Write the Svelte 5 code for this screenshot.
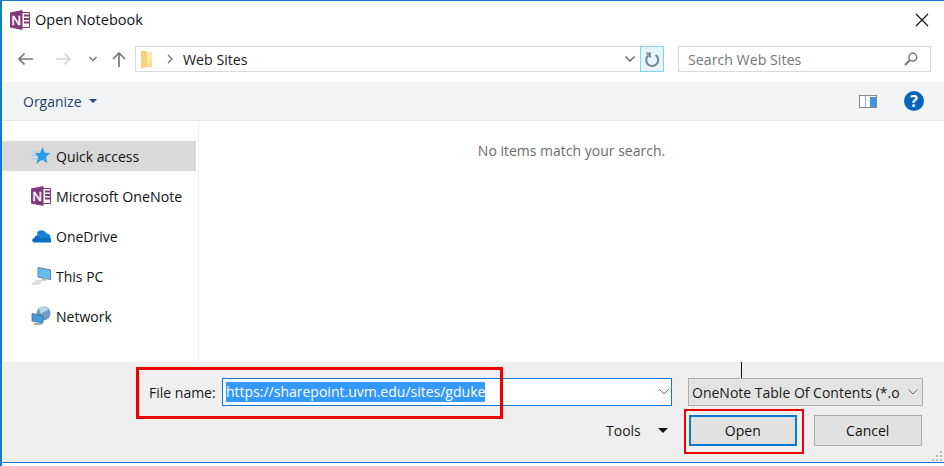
<script>
  const places = [
    { label: 'Quick access', icon: 'star', active: true },
    { label: 'Microsoft OneNote', icon: 'onenote' },
    { label: 'OneDrive', icon: 'cloud' },
    { label: 'This PC', icon: 'pc' },
    { label: 'Network', icon: 'network' },
  ]
</script>

{#snippet onenote()}
  <svg class="ico" viewBox="0 0 20 20" width="20" height="20">
    <path d="M11 2.500h8.500v15H11z" fill="#fff" stroke="#80397b" stroke-width="1" />
    <path d="M14 5.500h5M14 9h5M14 12.500h5" stroke="#80397b" stroke-width="2" />
    <path d="M0 2.500 12.500 0v20L0 17.500z" fill="#80397b" />
    <text x="6.200" y="14.500" class="n">N</text>
  </svg>
{/snippet}

<div class="dialog">
  <header class="title">
    {@render onenote()}
    <span class="title-text">Open Notebook</span>
    <svg class="close" viewBox="0 0 14 14" width="14" height="14">
      <path d="M1 1l12 12M13 1L1 13" stroke="#111" stroke-width="1.100" fill="none" />
    </svg>
  </header>

  <div class="nav">
    <div class="arrows">
      <svg class="back" viewBox="0 0 16 14" width="16" height="14"><path d="M16 7H2M7.500 1.500 2 7l5.500 5.500" stroke="#777" stroke-width="1.700" fill="none" /></svg>
      <svg class="forward" viewBox="0 0 16 14" width="16" height="14"><path d="M0 7h14M8.500 1.500 14 7l-5.500 5.500" stroke="#d4d4d4" stroke-width="1.700" fill="none" /></svg>
      <svg class="recent" viewBox="0 0 8 6" width="8" height="6"><path d="M.5 1 4 4.500 7.500 1" stroke="#777" stroke-width="1.500" fill="none" /></svg>
      <svg class="up" viewBox="0 0 14 16" width="14" height="16"><path d="M7 16V2M1 8l6-6 6 6" stroke="#777" stroke-width="1.700" fill="none" /></svg>
    </div>
    <div class="address">
      <svg class="folder" viewBox="0 0 12 18" width="12" height="18">
        <path d="M0 0h5l1 1v15l-5 1.500-1-1z" fill="#f3d27a" />
        <path d="M6 1h5v15H1l5-1z" fill="#fce9a9" />
        <path d="M11 9v7H4z" fill="#f7dc8e" />
      </svg>
      <svg class="crumb" viewBox="0 0 6 10" width="6" height="10"><path d="M1 1l4 4-4 4" stroke="#777" stroke-width="1.400" fill="none" /></svg>
      <span class="path">Web Sites</span>
      <svg class="drop" viewBox="0 0 10 6" width="10" height="6"><path d="M.5.500 5 5 9.500.5" stroke="#6a6a6a" stroke-width="1.500" fill="none" /></svg>
    </div>
    <div class="refresh">
      <svg viewBox="0 0 14 15" width="14" height="15">
        <path d="M3.600 3.200A6 6 0 1 0 10.500 3" stroke="#6d8494" stroke-width="2" fill="none" />
        <path d="M1.500 1.500h3.500v4" stroke="#6d8494" stroke-width="1.800" fill="none" />
      </svg>
    </div>
    <div class="search">
      <span>Search Web Sites</span>
      <svg viewBox="0 0 14 14" width="14" height="14">
        <circle cx="8.800" cy="5.200" r="3.900" stroke="#777" stroke-width="1.500" fill="none" />
        <path d="M6 8 1 13" stroke="#777" stroke-width="2" />
      </svg>
    </div>
  </div>

  <div class="toolbar">
    <span class="organize">Organize</span>
    <span class="caret navy"></span>
    <svg class="pane" viewBox="0 0 18 13" width="18" height="13">
      <rect x=".5" y=".5" width="17" height="12" fill="#fff" stroke="#888" />
      <path d="M6.500 1v11" stroke="#aaa" />
      <rect x="11" y="2" width="6" height="10" fill="#3f95e4" />
    </svg>
    <div class="help">?</div>
  </div>

  <div class="body">
    <nav class="side">
      {#each places as p}
        <div class="place" class:active={p.active}>
          <span class="place-icon">
            {#if p.icon === 'star'}
              <svg viewBox="0 0 20 20" width="20" height="20">
                <path d="M11.500 1l2.300 5.700 5.200.4-4 3.800 1.300 6.100-5.200-3.200-5.800 4 1.800-6.600L4 7.200l5.200-.5z" fill="#2b9be8" />
                <path d="M1.500 6h5M0 9.500h6M1 13h6" stroke="#8fcbf3" stroke-width="1" />
              </svg>
            {:else if p.icon === 'onenote'}
              {@render onenote()}
            {:else if p.icon === 'cloud'}
              <svg viewBox="0 0 20 14" width="20" height="14">
                <path d="M6 3.500A5.500 5.500 0 0 1 15.500 4.500a4 4 0 0 1 4 4.500H9L6 5z" fill="#1483d8" />
                <path d="M3.500 13.500H18a2.300 2.300 0 0 0 1-4.500h-9.500L7.500 6.500a3.500 3.500 0 0 0-4.200 2.600 2.200 2.200 0 0 0 .2 4.400z" fill="#0a6fc2" />
              </svg>
            {:else if p.icon === 'pc'}
              <svg viewBox="0 0 20 20" width="20" height="20">
                <path d="M7 1.500l12.500 2.300v9.700L7 11z" fill="#62bdee" stroke="#5a6f80" stroke-width=".8" />
                <path d="M0 19l5-5h7l-4 5z" fill="#d9dde0" />
                <path d="M11 12h4.500v2.500H11z" fill="#aab5bd" />
              </svg>
            {:else}
              <svg viewBox="0 0 20 20" width="20" height="20">
                <circle cx="12.500" cy="7.500" r="7" fill="#6f9cc0" />
                <path d="M8 3c3-3 7-2 9 0-1 3-5 2-7 5z" fill="#b9d7ea" />
                <path d="M1 7.500l11 2.500v7L1 15z" fill="#3f9fe0" stroke="#47657c" stroke-width=".8" />
                <path d="M3 17h8v2H3z" fill="#9fb1be" />
              </svg>
            {/if}
          </span>
          <span>{p.label}</span>
        </div>
      {/each}
    </nav>
    <main class="content">No items match your search.</main>
  </div>

  <footer class="footer">
    <div class="tick"></div>
    <div class="name-row">
      <label class="name-label" for="fname">File name:</label>
      <div class="name-input">
        <span class="selected" id="fname">https://sharepoint.uvm.edu/sites/gduke</span>
        <svg viewBox="0 0 10 6" width="10" height="6"><path d="M.5.500 5 5 9.500.5" stroke="#666" stroke-width="1" fill="none" /></svg>
      </div>
      <div class="type-select">
        <span>OneNote Table Of Contents (*.o</span>
        <svg viewBox="0 0 10 6" width="10" height="6"><path d="M.5.500 5 5 9.500.5" stroke="#666" stroke-width="1" fill="none" /></svg>
      </div>
    </div>
    <div class="action-row">
      <span class="tools">Tools</span>
      <span class="caret black"></span>
      <button class="btn primary">Open</button>
      <button class="btn">Cancel</button>
    </div>
    <svg class="grip" viewBox="0 0 10 10" width="10" height="10">
      <path d="M8 0h2v2H8zM4 4h2v2H4zM8 4h2v2H8zM0 8h2v2H0zM4 8h2v2H4zM8 8h2v2H8z" fill="#bbb" />
    </svg>
  </footer>

  <div class="mark mark-name"></div>
  <div class="mark mark-open"></div>
</div>

<style>
  :global(body) { margin: 0; background: #fff; }
  .dialog {
    position: relative;
    box-sizing: border-box;
    width: 944px;
    height: 466px;
    display: flex;
    flex-direction: column;
    border: 1px solid #0f7ad0;
    border-left-width: 2px;
    border-right: 0;
    border-bottom: 0;
    background: #fff;
    font-family: "Open Sans", "Noto Sans", sans-serif;
    font-size: 14px;
    color: #1a1a1a;
    overflow: hidden;
  }
  .ico { display: block; flex: none; }
  .n { font: 400 13px "Liberation Sans", sans-serif; fill: #fff; text-anchor: middle; stroke: #fff; stroke-width: .4px; }

  .title { height: 37px; flex: none; display: flex; align-items: center; padding-left: 8px; }
  .title-text { margin-left: 5px; font-size: 14.500px; color: #111; }
  .close { margin-left: auto; margin-right: 15px; margin-top: 1px; }

  .nav { height: 44px; flex: none; display: flex; align-items: center; padding-bottom: 2px; box-sizing: border-box; }
  .arrows { width: 133px; flex: none; display: flex; align-items: center; }
  .back { margin-left: 15px; }
  .forward { margin-left: 23px; }
  .recent { margin-left: 17px; }
  .up { margin-left: 15px; }
  .address {
    width: 505px; height: 26px; box-sizing: border-box; flex: none;
    border: 1px solid #d9d9d9; border-right: 0;
    display: flex; align-items: center; padding-left: 5px;
  }
  .folder { margin-top: 1px; }
  .crumb { margin-left: 14px; }
  .path { margin-left: 10px; font-size: 14.200px; }
  .drop { margin-left: auto; margin-right: 5px; }
  .refresh {
    width: 24px; height: 26px; box-sizing: border-box; flex: none;
    border: 1px solid #8ad0f3; background: #e5f3fb;
    display: flex; align-items: center; justify-content: center;
  }
  .search {
    width: 253px; height: 26px; box-sizing: border-box; flex: none; margin-left: 14px;
    border: 1px solid #d9d9d9;
    display: flex; align-items: center; justify-content: space-between;
    padding: 0 12px 0 9px; color: #767676; font-size: 14.200px;
  }

  .toolbar {
    height: 39px; flex: none; box-sizing: border-box;
    background: #f3f4f6; border-bottom: 1px solid #e6e6e6;
    display: flex; align-items: center; padding-left: 21px;
  }
  .organize { color: #27416b; font-size: 14px; }
  .caret { width: 0; height: 0; border-left: 4px solid transparent; border-right: 4px solid transparent; }
  .caret.navy { border-top: 4px solid #27416b; margin-left: 7px; }
  .pane { margin-left: auto; }
  .help {
    width: 20px; height: 20px; border-radius: 50%; background: #0a63bd; color: #fff;
    font: 700 16px/20px "Open Sans", sans-serif; text-align: center;
    margin: 0 20px 0 27px;
  }

  .body { flex: 1; display: flex; min-height: 0; }
  .side { width: 196px; flex: none; border-right: 1px solid #f0f0f0; padding-top: 20px; }
  .place { height: 30px; margin-bottom: 10px; width: 194px; display: flex; align-items: center; color: #111; font-size: 14px; }
  .place:nth-child(2) { font-size: 14.200px; }
  .place.active { background: #d9d9d9; }
  .place-icon { width: 20px; margin-left: 29px; margin-right: 5px; display: flex; justify-content: center; flex: none; }
  .content { flex: 1; text-align: center; color: #6d6d6d; font-size: 14px; padding-top: 20px; line-height: 20px; }

  .footer {
    position: relative; height: 101px; flex: none; box-sizing: border-box;
    background: #efefef; border-bottom: 1px solid #0f7ad0; margin-bottom: 3px;
    padding-top: 16px;
  }
  .tick { position: absolute; left: 739px; top: 0; width: 1px; height: 16px; background: #111; }
  .name-row { display: flex; align-items: center; height: 28px; }
  .name-label { margin-left: 147px; width: 73px; flex: none; font-size: 14px; }
  .name-input {
    width: 450px; height: 28px; box-sizing: border-box; flex: none;
    background: #fff; border: 1px solid #0f7ad0;
    display: flex; align-items: center; padding-left: 3px; font-size: 14px;
  }
  .selected { background: #3399ff; color: #fff; line-height: 20px; }
  .name-input svg { margin-left: auto; margin-right: 2px; }
  .type-select {
    margin-left: 16px; width: 235px; height: 28px; box-sizing: border-box; flex: none;
    background: #e3e3e3; border: 1px solid #adadad;
    display: flex; align-items: center; justify-content: space-between;
    padding: 0 4px 0 3px; font-size: 14px; white-space: nowrap;
  }
  .action-row { display: flex; align-items: center; height: 31px; margin-top: 9px; }
  .tools { margin-left: 604px; font-size: 14px; }
  .caret.black { border-left-width: 5px; border-right-width: 5px; border-top: 5px solid #111; margin-left: 17px; }
  .btn {
    box-sizing: border-box; height: 31px; width: 108px; padding: 0;
    background: #e1e1e1; border: 1px solid #adadad;
    font: inherit; font-size: 14px; color: #111;
    margin-left: 17px;
  }
  .btn.primary { width: 108px; margin-left: 21px; border: 2px solid #0a78d2; }
  .grip { position: absolute; right: 2px; bottom: 1px; }

  .mark { position: absolute; box-sizing: border-box; border: 3px solid #ee0000; pointer-events: none; }
  .mark-name { left: 134px; top: 366px; width: 367px; height: 52px; }
  .mark-open { left: 682px; top: 408px; width: 120px; height: 45px; border-width: 2px; }
</style>
